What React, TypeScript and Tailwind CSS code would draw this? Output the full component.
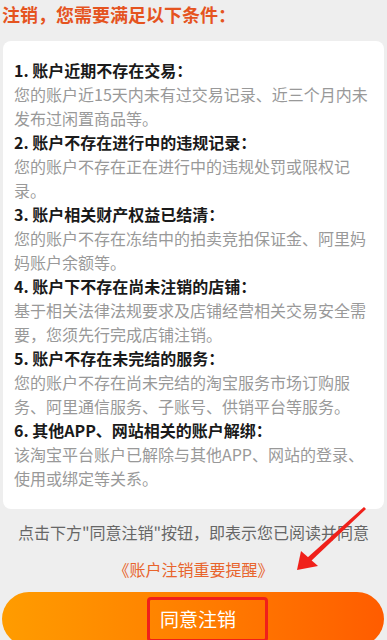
const rules = [
  {
    title: '1. 账户近期不存在交易：',
    desc: '您的账户近15天内未有过交易记录、近三个月内未发布过闲置商品等。',
  },
  {
    title: '2. 账户不存在进行中的违规记录：',
    desc: '您的账户不存在正在进行中的违规处罚或限权记录。',
  },
  {
    title: '3. 账户相关财产权益已结清：',
    desc: '您的账户不存在冻结中的拍卖竞拍保证金、阿里妈妈账户余额等。',
  },
  {
    title: '4. 账户下不存在尚未注销的店铺：',
    desc: '基于相关法律法规要求及店铺经营相关交易安全需要，您须先行完成店铺注销。',
  },
  {
    title: '5. 账户不存在未完结的服务：',
    desc: '您的账户不存在尚未完结的淘宝服务市场订购服务、阿里通信服务、子账号、供销平台等服务。',
  },
  {
    title: '6. 其他APP、网站相关的账户解绑：',
    desc: '该淘宝平台账户已解除与其他APP、网站的登录、使用或绑定等关系。',
  },
];

function Arrow() {
  return (
    <svg className="absolute left-[290px] top-[500px]" width="90" height="80" viewBox="0 0 90 80">
      <polygon points="74,7 76,9 20,62 17,58" fill="#f0201a" />
      <polygon points="7,70 11,51 28,66" fill="#f0201a" />
    </svg>
  );
}

export default function App() {
  return (
    <div
      className="relative w-[387px] h-[640px] overflow-hidden bg-[#eeeeee]"
      style={{ fontFamily: '"Noto Sans CJK SC", "Noto Sans", sans-serif' }}
    >
      <h1 className="pl-[2px] pt-[1px] text-[18px] leading-[26px] font-bold text-[#e5541f]">
        注销，您需要满足以下条件：
      </h1>

      <div className="mx-[3px] mt-[14px] rounded-[8px] bg-white pl-[11px] pr-[10px] pt-[17px] pb-[19px] text-[16px] leading-[24px]">
        {rules.map((r) => (
          <div key={r.title}>
            <p className="font-bold text-[#1a1a1a]">{r.title}</p>
            <p className="text-[#999999]">{r.desc}</p>
          </div>
        ))}
      </div>

      <p className="mt-[11px] text-center text-[16px] leading-[24px] text-[#666666]">
        点击下方"同意注销"按钮，即表示您已阅读并同意
      </p>
      <p className="mt-[13px] text-center text-[16px] leading-[24px] text-[#e8642c]">
        《账户注销重要提醒》
      </p>

      <button className="mx-[2px] mt-[11px] flex h-[54px] w-[382px] items-center justify-start rounded-full bg-gradient-to-r from-[#ff9c00] to-[#ff5c00] pl-[145px]">
        <span className="flex h-[45px] w-[121px] items-center justify-start rounded-[4px] border-[3px] border-[#f0201a] pl-[10px] text-[19px] text-white">
          同意注销
        </span>
      </button>

      <Arrow />
    </div>
  );
}
